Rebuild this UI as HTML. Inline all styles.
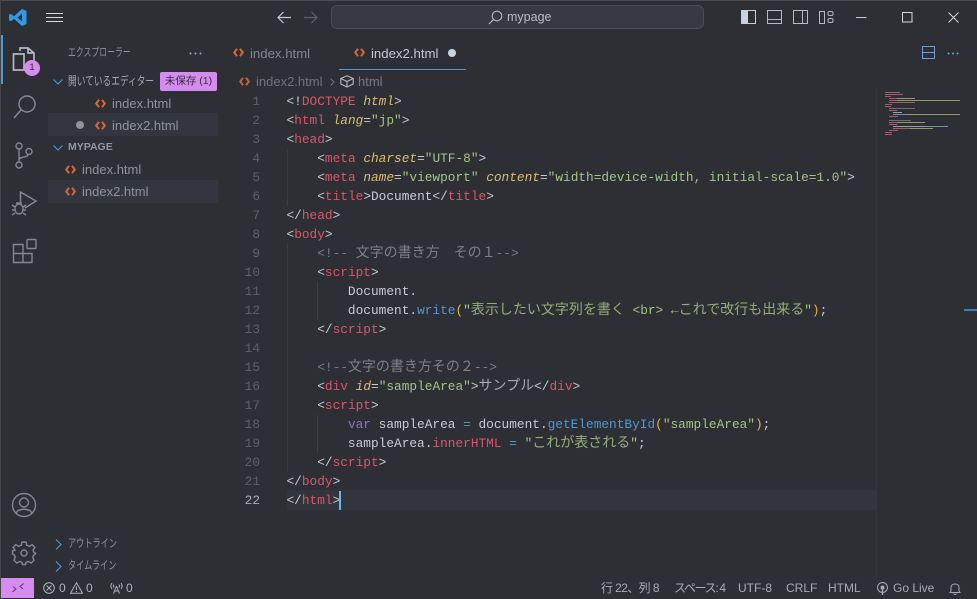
<!DOCTYPE html>
<html lang="ja"><head><meta charset="utf-8"><title>mypage</title>
<style>
*{box-sizing:border-box}
html,body{margin:0;padding:0;width:977px;height:599px;overflow:hidden;background:#2d2f35}
body{position:relative;font-family:"Liberation Sans","Noto Sans CJK JP",sans-serif;color:#8f939b;font-size:13px}
.a{position:absolute;white-space:nowrap}
.sx{transform-origin:left center}
svg{position:absolute;overflow:visible}
.ln{position:absolute;left:230px;width:30px;text-align:right;font:12.8px/19px "Liberation Mono",monospace;color:#5c6068}
.c{position:absolute;left:286.5px;white-space:pre;font:12.8px/19px "Liberation Mono","Noto Sans CJK JP",monospace;color:#c6cad2}
.c b{font-weight:normal;color:#d9566f}
.c i{color:#dcbc6e}
.c u{text-decoration:none;color:#a3c585}
.c s{text-decoration:none;color:#7b7f88}
.c em{font-style:normal;color:#4f97d7}
.c q{quotes:none;color:#e5b93e}
.c q:before,.c q:after{content:none}
.c .v{color:#8f6fd0}
.c .o{color:#4ea0b5}
.c .j{font-size:14px}
.c u .j{color:#93ad7a}
.c .g{color:#a6aab2}
.fi{position:absolute;fill:none;stroke:#d9673a;stroke-width:2}
.ic{fill:none;stroke:#83878f;stroke-width:1.4}
</style></head><body>

<!-- window edge -->
<div class="a" style="left:0;top:0;width:977px;height:1px;background:#4a4c52"></div>
<div class="a" style="left:0;top:0;width:1px;height:599px;background:#44464c"></div>

<!-- title bar -->
<svg style="left:9px;top:9px" width="18" height="17" viewBox="0 0 18 17"><path d="M13 0 17.500 2V15L13 17 5 9.800 1.800 12.300 0 11.200V5.800L1.800 4.700 5 7.200ZM13 4.600 8.500 8.500 13 12.400Z" fill="#2f9be6"/></svg>
<svg style="left:46px;top:13px" width="17" height="10"><path d="M0 .5H17M0 4.500H17M0 8.500H17" stroke="#d5d8dc" stroke-width="1"/></svg>
<svg style="left:277px;top:11px" width="14" height="13"><path d="M14 6.500H1M6.500 1 1 6.500 6.500 12" fill="none" stroke="#c4c7cd" stroke-width="1.200"/></svg>
<svg style="left:304px;top:11px" width="14" height="13"><path d="M0 6.500H13M7.500 1 13 6.500 7.500 12" fill="none" stroke="#5c6068" stroke-width="1.200"/></svg>
<div class="a" style="left:331px;top:5px;width:373px;height:24px;background:#383a41;border:1px solid #4b4e55;border-radius:6px"></div>
<svg style="left:488px;top:10px" width="15" height="15"><circle cx="9" cy="6" r="4.800" fill="none" stroke="#b6b9c0" stroke-width="1.100"/><path d="M5.500 9.500 1 14" stroke="#b6b9c0" stroke-width="1.200"/></svg>
<div class="a" style="left:507px;top:10px;font-size:12.500px;line-height:15px;color:#b8bbc2">mypage</div>

<svg style="left:741px;top:10px" width="15" height="15"><rect x=".5" y=".5" width="14" height="13" fill="none" stroke="#c9ccd2"/><rect x="1" y="1" width="6" height="12" fill="#c9d3e4"/></svg>
<svg style="left:767px;top:10px" width="15" height="15"><rect x=".5" y=".5" width="14" height="13" fill="none" stroke="#b6b9c0"/><path d="M1 9.500H14" stroke="#b6b9c0"/></svg>
<svg style="left:793px;top:10px" width="15" height="15"><rect x=".5" y=".5" width="14" height="13" fill="none" stroke="#b6b9c0"/><path d="M9.500 1V14" stroke="#b6b9c0"/></svg>
<svg style="left:819px;top:10px" width="15" height="15"><rect x=".5" y="1.500" width="5" height="12" fill="none" stroke="#b6b9c0"/><rect x="9" y="1.500" width="5" height="4" rx="1.500" fill="none" stroke="#b6b9c0"/><rect x="9" y="8.500" width="5" height="4" rx="1.500" fill="none" stroke="#b6b9c0"/></svg>
<svg style="left:856px;top:17px" width="11" height="2"><path d="M0 .5H10.500" stroke="#c9ccd2"/></svg>
<svg style="left:902px;top:12px" width="11" height="11"><rect x=".5" y=".5" width="9.500" height="9.500" fill="none" stroke="#d2d5da"/></svg>
<svg style="left:948px;top:12px" width="11" height="11"><path d="M.5 .5 10.500 10.500M10.500 .5 .5 10.500" stroke="#d2d5da" stroke-width="1"/></svg>

<!-- activity bar -->
<div class="a" style="left:1px;top:35px;width:2px;height:49px;background:#4d9bd6"></div>
<svg style="left:12px;top:46px" width="24" height="26" viewBox="0 0 24 26"><path class="ic" style="stroke:#b5b8be;stroke-width:1.700" d="M8 5V2H16L22 7V20H15M1.500 8H12V24H1.500ZM16 2V7H22"/></svg>
<div class="a" style="left:24px;top:60px;width:16px;height:16px;border-radius:50%;background:#d58bf0;color:#2d2f35;font-size:9.500px;line-height:16px;text-align:center">1</div>
<svg style="left:13px;top:94px" width="24" height="25"><circle cx="14" cy="10" r="8" class="ic" style="stroke-width:1.500"/><path d="M8 16 1 24" class="ic" style="stroke-width:1.600"/></svg>
<svg style="left:14px;top:142px" width="20" height="26"><circle cx="5" cy="4" r="3" class="ic"/><circle cx="5" cy="23" r="3" class="ic"/><circle cx="15" cy="9.500" r="3" class="ic"/><path d="M5 7V20M5 18C5 14 14 16 14 12.500" class="ic"/></svg>
<svg style="left:11px;top:190px" width="26" height="27"><path d="M9.500 12V2L25 11 14 18" class="ic" style="stroke-width:1.500"/><ellipse cx="8" cy="19" rx="4" ry="5" class="ic"/><path d="M1 15 4 17M1 20H4M1 25 4 23M15 15 12 17M15 20H12M15 25 12 23M5 13 11 13" class="ic"/></svg>
<svg style="left:12px;top:239px" width="25" height="25"><path d="M1.500 5.500H11V14.500H20V23.500H1.500ZM1.500 14.500H11V23.500" class="ic"/><rect x="15" y=".5" width="9" height="9" rx="1" class="ic"/></svg>
<svg style="left:12px;top:493px" width="24" height="24"><circle cx="12" cy="12" r="11.500" class="ic"/><circle cx="12" cy="9.500" r="4.500" class="ic"/><path d="M4.500 20C5 15 19 15 19.500 20" class="ic"/></svg>
<svg style="left:12px;top:541px" width="24" height="24" viewBox="0 0 24 24"><path class="ic" d="M10 1H14L14.700 4.300 17.400 5.400 20.200 3.600 22.900 6.300 21 9.200 22.100 11.800 23.500 12V13L21.900 13.900 20.700 16 22 19.200 19.200 22 16.300 20.400 14 21.500 13.500 23.500H10.500L10 21.500 7.700 20.400 4.800 22 2 19.200 3.300 16 2.100 13.900.5 13V10L3 9.200 1.100 6.300 3.800 3.600 6.600 5.400 9.300 4.300Z"/><circle cx="12" cy="12" r="3" class="ic"/></svg>

<!-- sidebar -->
<div class="a sx" style="left:68px;top:45px;font-size:11.500px;line-height:16px;color:#8b8f97;transform:scaleX(.685)">エクスプローラー</div>
<svg style="left:189px;top:52px" width="13" height="3"><circle cx="1.500" cy="1.500" r="1" fill="#a3a6ad"/><circle cx="6.500" cy="1.500" r="1" fill="#a3a6ad"/><circle cx="11.500" cy="1.500" r="1" fill="#a3a6ad"/></svg>
<svg style="left:53px;top:79px" width="10" height="6"><path d="M.5 .5 5 5 9.500 .5" fill="none" stroke="#4d9bd6" stroke-width="1.100"/></svg>
<div class="a sx" style="left:68px;top:73px;font-size:12px;line-height:16px;color:#a5a8af;transform:scaleX(.725)">開いているエディター</div>
<div class="a" style="left:160px;top:72px;width:57px;height:19px;background:#d58bf0;color:#34303a;font-size:10.500px;line-height:19px;text-align:center;border-radius:2px">未保存 (1)</div>
<div class="a" style="left:48px;top:113px;width:170px;height:23px;background:#33363e"></div>
<div class="a" style="left:48px;top:180px;width:170px;height:23px;background:#33363e"></div>
<div class="a" style="left:76px;top:121px;width:8px;height:8px;border-radius:50%;background:#8f939b"></div>

<svg class="fi" style="left:95px;top:99px" width="11" height="9"><path d="M4 .8 1.200 4.500 4 8.200M7 .8 9.800 4.500 7 8.200"/></svg>
<div class="a" style="left:112px;top:96px;font-size:13px;line-height:16px">index.html</div>
<svg class="fi" style="left:95px;top:121px" width="11" height="9"><path d="M4 .8 1.200 4.500 4 8.200M7 .8 9.800 4.500 7 8.200"/></svg>
<div class="a" style="left:112px;top:118px;font-size:13px;line-height:16px">index2.html</div>

<svg style="left:53px;top:145px" width="10" height="6"><path d="M.5 .5 5 5 9.500 .5" fill="none" stroke="#4d9bd6" stroke-width="1.100"/></svg>
<div class="a" style="left:68px;top:140px;font-size:10.500px;line-height:14px;font-weight:bold;color:#93969e">MYPAGE</div>
<svg class="fi" style="left:65px;top:165px" width="11" height="9"><path d="M4 .8 1.200 4.500 4 8.200M7 .8 9.800 4.500 7 8.200"/></svg>
<div class="a" style="left:82px;top:162px;font-size:13px;line-height:16px">index.html</div>
<svg class="fi" style="left:65px;top:187px" width="11" height="9"><path d="M4 .8 1.200 4.500 4 8.200M7 .8 9.800 4.500 7 8.200"/></svg>
<div class="a" style="left:82px;top:184px;font-size:13px;line-height:16px">index2.html</div>

<svg style="left:55px;top:539px" width="7" height="11"><path d="M1 .5 6 5.500 1 10.500" fill="none" stroke="#4d9bd6" stroke-width="1.100"/></svg>
<div class="a sx" style="left:68px;top:536px;font-size:11.500px;line-height:16px;transform:scaleX(.71)">アウトライン</div>
<svg style="left:55px;top:561px" width="7" height="11"><path d="M1 .5 6 5.500 1 10.500" fill="none" stroke="#4d9bd6" stroke-width="1.100"/></svg>
<div class="a sx" style="left:68px;top:558px;font-size:11.500px;line-height:16px;transform:scaleX(.71)">タイムライン</div>

<!-- tabs -->
<svg class="fi" style="left:233px;top:48px" width="11" height="9"><path d="M4 .8 1.200 4.500 4 8.200M7 .8 9.800 4.500 7 8.200"/></svg>
<div class="a" style="left:250px;top:46px;font-size:13.200px;line-height:16px;color:#82868e">index.html</div>
<svg class="fi" style="left:354px;top:48px" width="11" height="9"><path d="M4 .8 1.200 4.500 4 8.200M7 .8 9.800 4.500 7 8.200"/></svg>
<div class="a" style="left:371px;top:46px;font-size:13.200px;line-height:16px;color:#c4c7cd">index2.html</div>
<div class="a" style="left:448px;top:49px;width:8px;height:8px;border-radius:50%;background:#c9d3e4"></div>
<div class="a" style="left:339px;top:69px;width:127px;height:1px;background:#4d9bd6"></div>
<svg style="left:922px;top:46px" width="13" height="13"><rect x=".5" y=".5" width="12" height="12" fill="none" stroke="#6d9fdc"/><path d="M1 6.500H12" stroke="#6d9fdc"/></svg>
<svg style="left:947px;top:52px" width="13" height="3"><circle cx="1.500" cy="1.500" r="1" fill="#6d9fdc"/><circle cx="6" cy="1.500" r="1" fill="#6d9fdc"/><circle cx="10.500" cy="1.500" r="1" fill="#6d9fdc"/></svg>

<!-- breadcrumb -->
<svg class="fi" style="left:239px;top:77px;stroke:#c4633a" width="11" height="9"><path d="M4 .8 1.200 4.500 4 8.200M7 .8 9.800 4.500 7 8.200"/></svg>
<div class="a" style="left:256px;top:74px;font-size:13px;line-height:16px;color:#6f737b">index2.html</div>
<svg style="left:330px;top:78px" width="5" height="8"><path d="M.5 .5 4 4 .5 7.500" fill="none" stroke="#6f737b"/></svg>
<svg style="left:340px;top:75px" width="14" height="13"><path d="M7 .8 13.200 3.500V9L7 12 .8 9V3.500ZM.8 3.500 7 6.500 13.200 3.500M7 6.500V12" fill="none" stroke="#b6b9c0" stroke-width="1.100"/></svg>
<div class="a" style="left:358px;top:74px;font-size:13px;line-height:16px;color:#777b83">html</div>

<!-- gutter -->
<div class="a" style="left:287px;top:490px;width:589px;height:20px;background:#33353c"></div>
<div class="ln" style="top:92px">1</div><div class="ln" style="top:111px">2</div><div class="ln" style="top:130px">3</div><div class="ln" style="top:149px">4</div><div class="ln" style="top:168px">5</div><div class="ln" style="top:187px">6</div><div class="ln" style="top:206px">7</div><div class="ln" style="top:225px">8</div><div class="ln" style="top:244px">9</div><div class="ln" style="top:263px">10</div><div class="ln" style="top:282px">11</div><div class="ln" style="top:301px">12</div><div class="ln" style="top:320px">13</div><div class="ln" style="top:339px">14</div><div class="ln" style="top:358px">15</div><div class="ln" style="top:377px">16</div><div class="ln" style="top:396px">17</div><div class="ln" style="top:415px">18</div><div class="ln" style="top:434px">19</div><div class="ln" style="top:453px">20</div><div class="ln" style="top:472px">21</div><div class="ln" style="top:491px;color:#a8acb4">22</div>

<!-- indent guides -->
<div class="a" style="left:287px;top:149px;width:1px;height:57px;background:#383b42"></div>
<div class="a" style="left:287px;top:244px;width:1px;height:228px;background:#383b42"></div>
<div class="a" style="left:317px;top:282px;width:1px;height:38px;background:#3b3e45"></div>
<div class="a" style="left:317px;top:415px;width:1px;height:38px;background:#3b3e45"></div>

<!-- code -->
<div class="c" style="top:92px">&lt;!<b>DOCTYPE</b> <i>html</i>&gt;</div>
<div class="c" style="top:111px">&lt;<b>html</b> <i>lang</i>=<u>"jp"</u>&gt;</div>
<div class="c" style="top:130px">&lt;<b>head</b>&gt;</div>
<div class="c" style="top:149px">    &lt;<b>meta</b> <i>charset</i>=<u>"UTF-8"</u>&gt;</div>
<div class="c" style="top:168px">    &lt;<b>meta</b> <i>name</i>=<u>"viewport"</u> <i>content</i>=<u>"width=device-width, initial-scale=1.0"</u>&gt;</div>
<div class="c" style="top:187px">    &lt;<b>title</b>&gt;Document&lt;/<b>title</b>&gt;</div>
<div class="c" style="top:206px">&lt;/<b>head</b>&gt;</div>
<div class="c" style="top:225px">&lt;<b>body</b>&gt;</div>
<div class="c" style="top:244px">    <s>&lt;!-- <span class="j">文字の書き方　その１</span>--&gt;</s></div>
<div class="c" style="top:263px">    &lt;<b>script</b>&gt;</div>
<div class="c" style="top:282px">        Document.</div>
<div class="c" style="top:301px">        document.<em>write</em><q>(</q><u>"<span class="j">表示したい文字列を書く</span> &lt;br&gt; ←<span class="j">これで改行も出来る</span>"</u><q>)</q>;</div>
<div class="c" style="top:320px">    &lt;/<b>script</b>&gt;</div>
<div class="c" style="top:358px">    <s>&lt;!--<span class="j">文字の書き方その２</span>--&gt;</s></div>
<div class="c" style="top:377px">    &lt;<b>div</b> <i>id</i>=<u>"sampleArea"</u>&gt;<span class="j g">サンプル</span>&lt;/<b>div</b>&gt;</div>
<div class="c" style="top:396px">    &lt;<b>script</b>&gt;</div>
<div class="c" style="top:415px">        <span class="v">var</span> sampleArea <span class="o">=</span> document.<em>getElementById</em><q>(</q><u>"sampleArea"</u><q>)</q>;</div>
<div class="c" style="top:434px">        sampleArea.<b>innerHTML</b> <span class="o">=</span> <u>"<span class="j">これが表される</span>"</u>;</div>
<div class="c" style="top:453px">    &lt;/<b>script</b>&gt;</div>
<div class="c" style="top:472px">&lt;/<b>body</b>&gt;</div>
<div class="c" style="top:491px">&lt;/<b>html</b>&gt;</div>
<div class="a" style="left:339px;top:491px;width:2px;height:19px;background:#6db5e8"></div>

<!-- minimap -->
<svg style="left:885px;top:92px" width="80" height="46">
<g stroke-width="1">
<path d="M0 .5H15M0 2.500H18M0 4.500H6" stroke="#a8596b"/>
<path d="M4 6.500H12" stroke="#a8596b"/><path d="M12 6.500H30" stroke="#8f9a68"/>
<path d="M4 8.500H12" stroke="#a8596b"/><path d="M12 8.500H75" stroke="#8f9a68"/>
<path d="M4 10.500H30M0 12.500H7M0 14.500H6" stroke="#a8596b"/>
<path d="M4 16.500H30" stroke="#6a6e76"/>
<path d="M4 18.500H12" stroke="#a8596b"/>
<path d="M8 20.500H17" stroke="#9a9da4"/>
<path d="M8 22.500H24" stroke="#6f8fb5"/><path d="M24 22.500H75" stroke="#8f9a68"/>
<path d="M4 24.500H13" stroke="#a8596b"/>
<path d="M4 28.500H26" stroke="#6a6e76"/>
<path d="M4 30.500H12" stroke="#a8596b"/><path d="M12 30.500H40" stroke="#8f9a68"/>
<path d="M4 32.500H12" stroke="#a8596b"/>
<path d="M8 34.500H40" stroke="#9a9da4"/><path d="M40 34.500H63" stroke="#6f8fb5"/>
<path d="M8 36.500H25" stroke="#a8596b"/><path d="M25 36.500H48" stroke="#8f9a68"/>
<path d="M4 38.500H13M0 40.500H7M0 42.500H7" stroke="#a8596b"/>
</g></svg>
<div class="a" style="left:964px;top:309px;width:13px;height:2px;background:#3f7fb5"></div>
<div class="a" style="left:876px;top:88px;width:1px;height:490px;background:#33353b"></div>

<!-- status bar -->
<div class="a" style="left:1px;top:578px;width:33px;height:20px;background:#d58bf0"></div>
<svg style="left:12px;top:582px" width="12" height="12"><path d="M.5 10 4 7 1 4.500M11.500 1.500 8 4.500 11 7" fill="none" stroke="#5d3a6e" stroke-width="1"/></svg>
<svg style="left:43px;top:582px" width="12" height="12"><circle cx="6" cy="6" r="5.300" fill="none" stroke="#b0b3ba"/><path d="M3.500 3.500 8.500 8.500M8.500 3.500 3.500 8.500" stroke="#b0b3ba"/></svg>
<div class="a" style="left:59px;top:581px;font-size:12px;line-height:15px;color:#b0b3ba">0</div>
<svg style="left:70px;top:582px" width="13" height="12"><path d="M6.500 .8 12.500 11.200H.5ZM6.500 4.500V8M6.500 9V10" fill="none" stroke="#b0b3ba"/></svg>
<div class="a" style="left:86px;top:581px;font-size:12px;line-height:15px;color:#b0b3ba">0</div>
<svg style="left:110px;top:582px" width="13" height="12"><path d="M6.500 4 3.500 11.500M6.500 4 9.500 11.500M4.500 9H8.500M2 1C.5 3 .5 5 2 7M11 1C12.500 3 12.500 5 11 7M4 2.500C3.300 3.500 3.300 4.500 4 5.500M9 2.500C9.700 3.500 9.700 4.500 9 5.500" fill="none" stroke="#b0b3ba"/></svg>
<div class="a" style="left:126px;top:581px;font-size:12px;line-height:15px;color:#b0b3ba">0</div>

<div class="a" style="left:601px;top:581px;font-size:12px;line-height:15px;color:#a8abb2;letter-spacing:-.6px">行 22、列 8</div>
<div class="a" style="left:674px;top:581px;font-size:12px;line-height:15px;color:#a8abb2;letter-spacing:-1.300px">スペース: 4</div>
<div class="a" style="left:738px;top:581px;font-size:12px;line-height:15px;color:#a8abb2">UTF-8</div>
<div class="a" style="left:786px;top:581px;font-size:12px;line-height:15px;color:#a8abb2">CRLF</div>
<div class="a" style="left:828px;top:581px;font-size:12px;line-height:15px;color:#a8abb2">HTML</div>
<svg style="left:876px;top:582px" width="13" height="13"><circle cx="6.500" cy="5.500" r="5" fill="none" stroke="#a8abb2"/><circle cx="6.500" cy="5.500" r="2" fill="#a8abb2"/><path d="M6.500 7V13" stroke="#a8abb2" stroke-width="1.500"/></svg>
<div class="a" style="left:893px;top:581px;font-size:12px;line-height:15px;color:#a8abb2">Go Live</div>
<svg style="left:949px;top:582px" width="12" height="13"><path d="M2 9V5C2 1 10 1 10 5V9L11 10.500H1ZM4.500 11.500C5 12.800 7 12.800 7.500 11.500" fill="none" stroke="#a8abb2"/></svg>

</body></html>
